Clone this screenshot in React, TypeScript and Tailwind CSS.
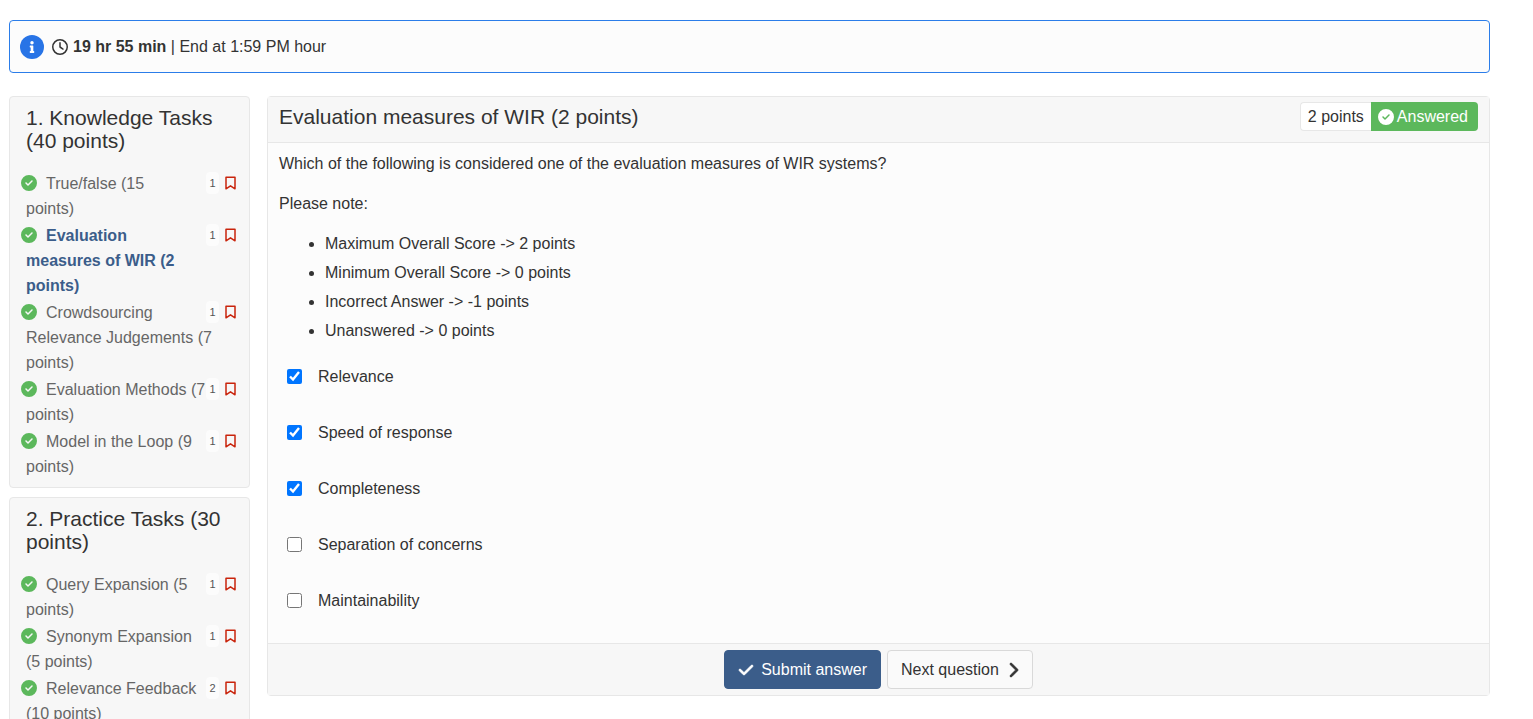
import { useState } from "react";
import { FaInfo } from "react-icons/fa";
import { FaCheck, FaChevronRight, FaCircleCheck, FaRegClock } from "react-icons/fa6";

type Task = { title: string; count: number; active?: boolean };
type Section = { heading: string; tasks: Task[] };

const sections: Section[] = [
  {
    heading: "1. Knowledge Tasks (40 points)",
    tasks: [
      { title: "True/false (15\npoints)", count: 1 },
      { title: "Evaluation\nmeasures of WIR (2\npoints)", count: 1, active: true },
      { title: "Crowdsourcing\nRelevance Judgements (7\npoints)", count: 1 },
      { title: "Evaluation Methods (7\npoints)", count: 1 },
      { title: "Model in the Loop (9\npoints)", count: 1 },
    ],
  },
  {
    heading: "2. Practice Tasks (30 points)",
    tasks: [
      { title: "Query Expansion (5\npoints)", count: 1 },
      { title: "Synonym Expansion\n(5 points)", count: 1 },
      { title: "Relevance Feedback\n(10 points)", count: 2 },
    ],
  },
];

const notes = [
  "Maximum Overall Score -> 2 points",
  "Minimum Overall Score -> 0 points",
  "Incorrect Answer -> -1 points",
  "Unanswered -> 0 points",
];

const options = [
  { id: "relevance", label: "Relevance" },
  { id: "speed", label: "Speed of response" },
  { id: "completeness", label: "Completeness" },
  { id: "separation", label: "Separation of concerns" },
  { id: "maintainability", label: "Maintainability" },
];

function BookmarkIcon() {
  return (
    <svg viewBox="0 0 11 14" className="h-[14px] w-[11px]" fill="none" stroke="#c9240c" strokeWidth="1.5" aria-hidden="true">
      <path d="M1 1.2h9v11.6L5.5 9.8 1 12.8z" strokeLinejoin="round" />
    </svg>
  );
}

function TaskItem({ task }: { task: Task }) {
  return (
    <li className="leading-[25px]">
      <div className="float-right flex h-6 items-center gap-1.5">
        <span className="flex h-[22px] w-[13px] items-center justify-center rounded-sm bg-[#fcfcfc] text-[11px] leading-none text-[#555]">
          {task.count}
        </span>
        <button type="button" aria-label="Bookmark">
          <BookmarkIcon />
        </button>
      </div>
      <a
        href="#question"
        className={
          task.active
            ? "whitespace-pre-line font-bold text-[#3b5d8a]"
            : "whitespace-pre-line text-[#666]"
        }
      >
        <FaCircleCheck className="mr-[9px] -ml-[5px] inline size-4 align-[-2px] text-[#5cb85c]" />
        {task.title}
      </a>
    </li>
  );
}

export default function App() {
  const [checked, setChecked] = useState(["relevance", "speed", "completeness"]);

  const toggle = (id: string) =>
    setChecked((prev) => (prev.includes(id) ? prev.filter((x) => x !== id) : [...prev, id]));

  return (
    <div className="min-h-screen bg-white pt-5 pr-[43px] pl-[9px] font-['Liberation_Sans',Arial,sans-serif] text-base text-[#333]">
      <div className="flex h-[53px] items-center rounded border border-[#2b7de9] bg-[#fcfcfc] px-2.5">
        <span className="flex size-6 items-center justify-center rounded-full bg-[#2874e6] text-white">
          <FaInfo className="size-3" />
        </span>
        <FaRegClock className="mr-[5px] ml-2 size-4" />
        <p>
          <strong>19 hr 55 min</strong> | End at 1:59 PM hour
        </p>
      </div>

      <div className="mt-[23px] flex items-start gap-[17px]">
        <aside className="flex w-[241px] shrink-0 flex-col gap-[9px]">
          {sections.map((section) => (
            <nav
              key={section.heading}
              className="rounded border border-[#e7e7e7] bg-[#f7f7f7] pt-[9px] pr-[13px] pb-2 pl-4"
            >
              <h2 className="mb-[19px] text-[21px] leading-[23px]">{section.heading}</h2>
              <ul className="flex flex-col gap-0.5">
                {section.tasks.map((task) => (
                  <TaskItem key={task.title} task={task} />
                ))}
              </ul>
            </nav>
          ))}
        </aside>

        <main id="question" className="min-w-0 flex-1 rounded border border-[#e7e7e7] bg-[#fcfcfc]">
          <header className="flex items-center justify-between border-b border-[#e7e7e7] bg-[#f7f7f7] pt-[5px] pr-[11px] pb-[11px] pl-[11px]">
            <h1 className="text-[21px] leading-[23px]">Evaluation measures of WIR (2 points)</h1>
            <div className="flex h-[29px]">
              <span className="flex items-center rounded-l border border-r-0 border-[#e7e7e7] bg-white px-[7px]">
                2 points
              </span>
              <span className="flex items-center gap-[3px] rounded-r bg-[#5cb85c] pr-2.5 pl-[7px] text-white">
                <FaCircleCheck className="size-4" />
                Answered
              </span>
            </div>
          </header>

          <section className="px-[11px] pt-[9px] pb-3.5 leading-6">
            <p>Which of the following is considered one of the evaluation measures of WIR systems?</p>
            <p className="mt-4">Please note:</p>
            <ul className="mt-4 flex list-disc flex-col gap-[5px] pl-[46px]">
              {notes.map((note) => (
                <li key={note}>{note}</li>
              ))}
            </ul>
            <div className="mt-1.5">
              {options.map((option) => (
                <div key={option.id} className="flex h-14 items-center gap-4 pl-2">
                  <input
                    id={option.id}
                    type="checkbox"
                    className="mb-0.5 size-[15px]"
                    checked={checked.includes(option.id)}
                    onChange={() => toggle(option.id)}
                  />
                  <label htmlFor={option.id}>{option.label}</label>
                </div>
              ))}
            </div>
          </section>

          <footer className="flex justify-center gap-1.5 border-t border-[#e7e7e7] bg-[#f7f7f7] py-1.5">
            <button
              type="button"
              className="flex h-[39px] items-center gap-[7px] rounded border border-[#3b5d8a] bg-[#3b5d8a] px-[13px] text-white"
            >
              <FaCheck className="size-4" stroke="currentColor" strokeWidth="24" />
              Submit answer
            </button>
            <button
              type="button"
              className="flex h-[39px] items-center gap-2 rounded border border-[#d9d9d9] bg-[#fafafa] px-[13px]"
            >
              Next question
              <FaChevronRight className="h-4 w-3" stroke="currentColor" strokeWidth="24" />
            </button>
          </footer>
        </main>
      </div>
    </div>
  );
}
